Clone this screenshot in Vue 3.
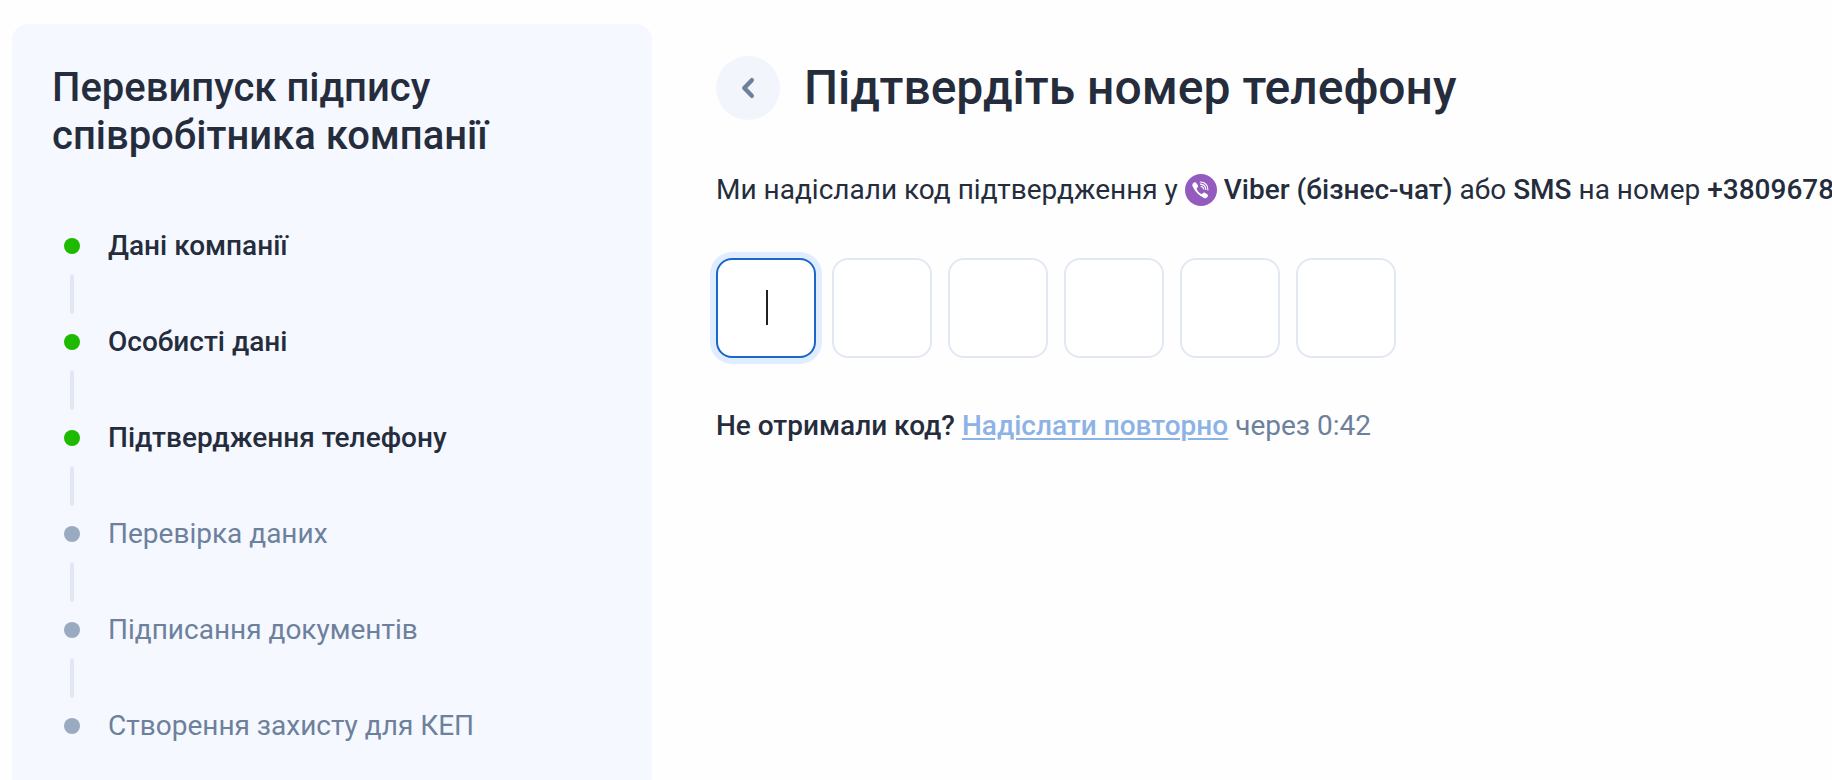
<script setup>
import { ref } from 'vue'

const steps = [
  { label: 'Дані компанії', done: true },
  { label: 'Особисті дані', done: true },
  { label: 'Підтвердження телефону', done: true },
  { label: 'Перевірка даних', done: false },
  { label: 'Підписання документів', done: false },
  { label: 'Створення захисту для КЕП', done: false },
]

const code = ref(['', '', '', '', '', ''])
const active = ref(0)
</script>

<template>
  <div class="page">
    <aside class="sidebar">
      <h2 class="sidebar-title">Перевипуск підпису співробітника компанії</h2>
      <ol class="steps">
        <li v-for="step in steps" :key="step.label" class="step" :class="{ done: step.done }">
          <span class="dot"></span>
          <span class="step-label">{{ step.label }}</span>
        </li>
      </ol>
    </aside>

    <main class="content">
      <header class="heading">
        <button type="button" class="back" aria-label="Назад">
          <svg width="14" height="22" viewBox="0 0 14 22" aria-hidden="true">
            <path d="M10.8 3.2L3.3 11L10.8 18.8" />
          </svg>
        </button>
        <h1 class="title">Підтвердіть номер телефону</h1>
      </header>

      <p class="message">
        Ми надіслали код підтвердження у
        <svg class="viber" width="32" height="32" viewBox="0 0 32 32" aria-hidden="true">
          <circle cx="16" cy="16" r="16" fill="#945bbf" />
          <path
            class="handset"
            d="M8.1 9.3C8.9 8.5 9.7 8 10.4 8.3C11.4 8.8 12.3 10.4 12.9 11.6C13.3 12.4 13.1 13 12.5 13.5C11.6 14.2 11.5 14.7 11.9 15.6C12.8 17.6 14 18.9 15.9 19.8C16.7 20.2 17.3 20.1 17.9 19.3C18.5 18.6 19.1 18.4 19.9 18.8C21 19.4 22 20 22.7 20.7C23.4 21.4 23 22.3 22.2 23.2C21.2 24.3 20.2 24.6 18.9 24C13.8 21.5 10.1 17.7 7.8 12.8C7.1 11.3 7.1 10.3 8.1 9.3Z"
          />
          <path class="wave" d="M15.2 8C19.8 8.1 22.8 11.1 22.9 15.8" />
          <path class="wave" d="M15.6 10.2C18.7 10.4 20.6 12.3 20.8 15.5" />
          <path class="wave" d="M16.2 12.4C17.7 12.6 18.5 13.5 18.7 15" />
        </svg>&nbsp;<b>Viber (бізнес-чат)</b> або <b>SMS</b> на номер <b>+3809678</b>
      </p>

      <form class="code" aria-label="Код підтвердження" @submit.prevent>
        <label v-for="(_, i) in code" :key="i" class="cell" :class="{ active: active === i }">
          <input
            v-model="code[i]"
            class="digit"
            type="text"
            inputmode="numeric"
            maxlength="1"
            :aria-label="`Цифра ${i + 1}`"
            @focus="active = i"
          />
        </label>
      </form>

      <p class="resend">
        <b>Не отримали код?</b> <a href="#" class="resend-link">Надіслати повторно</a> через 0:42
      </p>
    </main>
  </div>
</template>

<style>
body {
  background: #fefefe;
}
</style>

<style scoped>
.page {
  display: grid;
  grid-template-columns: 640px minmax(0, 1fr);
  column-gap: 64px;
  min-height: 100vh;
  box-sizing: border-box;
  padding: 24px 0 0 12px;
  overflow: hidden;
  font-family: Roboto, 'Noto Sans', sans-serif;
  font-size: 28px;
  line-height: 32px;
  color: #252d3d;
}

.sidebar {
  padding: 40px 40px 36px;
  border-radius: 16px 16px 0 0;
  background: #f5f8ff;
}

.sidebar-title {
  max-width: 480px;
  margin: 0;
  font-size: 40px;
  line-height: 48px;
  font-weight: 500;
}

.steps {
  display: flex;
  flex-direction: column;
  gap: 64px;
  margin: 70px 0 0;
  padding: 0 0 0 12px;
  list-style: none;
}

.step {
  position: relative;
  display: flex;
  align-items: center;
  gap: 28px;
  color: #6d809c;
}

.step.done {
  color: #252d3d;
  font-weight: 500;
}

.step:not(:last-child)::after {
  content: '';
  position: absolute;
  top: 44px;
  left: 6px;
  width: 4px;
  height: 40px;
  border-radius: 2px;
  background: #e2e8f3;
}

.dot {
  width: 16px;
  height: 16px;
  border-radius: 50%;
  background: #9aabc1;
}

.done .dot {
  background: #1eb900;
}

.content {
  padding-top: 32px;
}

.heading {
  display: flex;
  align-items: center;
  gap: 24px;
}

.back {
  display: grid;
  place-items: center;
  width: 64px;
  height: 64px;
  padding: 0;
  border: 0;
  border-radius: 50%;
  background: #f2f6fc;
}

.back path {
  fill: none;
  stroke: #6d809c;
  stroke-width: 4.4;
  stroke-linecap: round;
  stroke-linejoin: round;
}

.title {
  margin: 0;
  font-size: 48px;
  line-height: 64px;
  font-weight: 500;
  white-space: nowrap;
}

.message {
  margin: 54px 0 0;
  white-space: nowrap;
}

.viber {
  vertical-align: top;
}

.handset {
  fill: #fff;
}

.wave {
  fill: none;
  stroke: #fff;
  stroke-width: 1.2;
  stroke-linecap: round;
}

b {
  font-weight: 500;
}

.code {
  display: flex;
  gap: 16px;
  margin-top: 52px;
}

.cell {
  position: relative;
  display: block;
  width: 100px;
  height: 100px;
}

.digit {
  box-sizing: border-box;
  width: 100%;
  height: 100%;
  padding: 0;
  border: 2px solid #e2e8f3;
  border-radius: 16px;
  outline: none;
  background: #fff;
  color: inherit;
  caret-color: transparent;
  font: inherit;
  text-align: center;
}

.active .digit {
  border-color: #1b66c9;
  box-shadow: 0 0 0 6px #e0edff;
}

.active::after {
  content: '';
  position: absolute;
  top: 32px;
  left: 50px;
  width: 2px;
  height: 35px;
  background: #202124;
}

.resend {
  margin: 52px 0 0;
  color: #6d809c;
}

.resend b {
  color: #252d3d;
}

.resend-link {
  color: #8db2e6;
  font-weight: 500;
  text-decoration-thickness: 2px;
  text-underline-offset: 3px;
}
</style>
